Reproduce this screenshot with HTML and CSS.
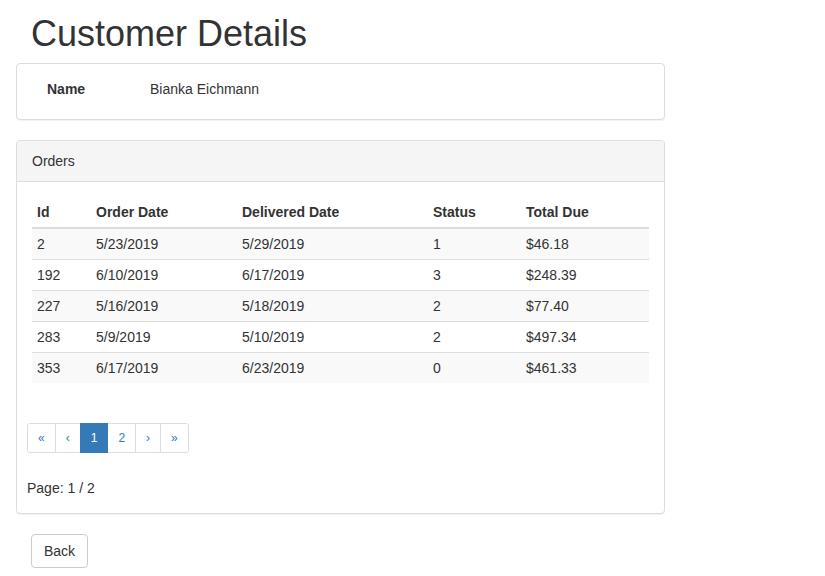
FILE: index.html
```html
<!DOCTYPE html>
<html>
<head>
<meta charset="utf-8">
<title>Customer Details</title>
<link rel="stylesheet" href="styles.css">
</head>
<body>
<div class="page">
  <h1 class="title">Customer Details</h1>
  <div class="panel">
    <div class="panel-body info">
      <span class="label">Name</span>
      <span class="value">Bianka Eichmann</span>
    </div>
  </div>
  <div class="panel">
    <div class="panel-heading">Orders</div>
    <div class="panel-body orders">
      <table class="table">
        <colgroup>
          <col class="c-id"><col class="c-od"><col class="c-dd"><col class="c-st"><col class="c-tot">
        </colgroup>
        <thead>
          <tr><th>Id</th><th>Order Date</th><th>Delivered Date</th><th>Status</th><th>Total Due</th></tr>
        </thead>
        <tbody>
          <tr><td>2</td><td>5/23/2019</td><td>5/29/2019</td><td>1</td><td>$46.18</td></tr>
          <tr><td>192</td><td>6/10/2019</td><td>6/17/2019</td><td>3</td><td>$248.39</td></tr>
          <tr><td>227</td><td>5/16/2019</td><td>5/18/2019</td><td>2</td><td>$77.40</td></tr>
          <tr><td>283</td><td>5/9/2019</td><td>5/10/2019</td><td>2</td><td>$497.34</td></tr>
          <tr><td>353</td><td>6/17/2019</td><td>6/23/2019</td><td>0</td><td>$461.33</td></tr>
        </tbody>
      </table>
      <div class="pager-wrap">
        <ul class="pagination">
          <li><a href="#">«</a></li>
          <li><a href="#">‹</a></li>
          <li class="active"><a href="#">1</a></li>
          <li><a href="#">2</a></li>
          <li><a href="#">›</a></li>
          <li><a href="#">»</a></li>
        </ul>
        <div class="page-count">Page: 1 / 2</div>
      </div>
    </div>
  </div>
  <button class="btn">Back</button>
</div>
</body>
</html>
```

FILE: styles.css
```css
html, body {
  margin: 0;
  padding: 0;
  background: #fff;
}
body {
  font-family: "Liberation Sans", Arial, Helvetica, sans-serif;
  font-size: 14px;
  line-height: 20px;
  color: #333;
}
.page {
  width: 649px;
  padding: 0 16px;
}
.title {
  font-size: 36px;
  font-weight: 500;
  line-height: 40px;
  margin: 14px 0 9px 15px;
  color: #333;
}
.panel {
  border: 1px solid #ddd;
  border-radius: 4px;
  background: #fff;
  box-shadow: 0 1px 1px rgba(0,0,0,.05);
  margin-bottom: 20px;
}
.panel-heading {
  background: #f5f5f5;
  border-bottom: 1px solid #ddd;
  border-radius: 3px 3px 0 0;
  padding: 10px 15px;
}
.panel-body {
  padding: 15px;
}
.info {
  display: flex;
  padding: 15px 15px 20px 30px;
}
.label {
  font-weight: bold;
  width: 103px;
}
.table {
  width: 100%;
  border-collapse: collapse;
  border-spacing: 0;
  table-layout: fixed;
  margin: 0;
}
.c-id { width: 59px; }
.c-od { width: 146px; }
.c-dd { width: 191px; }
.c-st { width: 93px; }
.c-tot { width: auto; }
.table th {
  text-align: left;
  font-weight: bold;
  padding: 5px;
  vertical-align: bottom;
  border-bottom: 2px solid #ddd;
}
.table td {
  padding: 5px;
  border-top: 1px solid #ddd;
}
.table tbody tr:nth-child(odd) {
  background: #f9f9f9;
}
.pager-wrap {
  margin-left: -5px;
  padding-top: 40px;
}
.pagination {
  display: flex;
  list-style: none;
  margin: 0 0 25px;
  padding: 0;
}
.pagination li a {
  display: block;
  padding: 5px 10px;
  font-size: 12px;
  line-height: 18px;
  color: #337ab7;
  text-decoration: none;
  border: 1px solid #ddd;
  margin-left: -1px;
  background: #fff;
}
.pagination li:first-child a {
  margin-left: 0;
  border-radius: 3px 0 0 3px;
}
.pagination li:last-child a {
  border-radius: 0 3px 3px 0;
}
.pagination li.active a {
  background: #337ab7;
  border-color: #337ab7;
  color: #fff;
  position: relative;
  z-index: 1;
}
.btn {
  font-family: inherit;
  font-size: 14px;
  line-height: 20px;
  color: #333;
  background: #fff;
  border: 1px solid #ccc;
  border-radius: 4px;
  padding: 6px 12px;
  margin-left: 15px;
}
```
